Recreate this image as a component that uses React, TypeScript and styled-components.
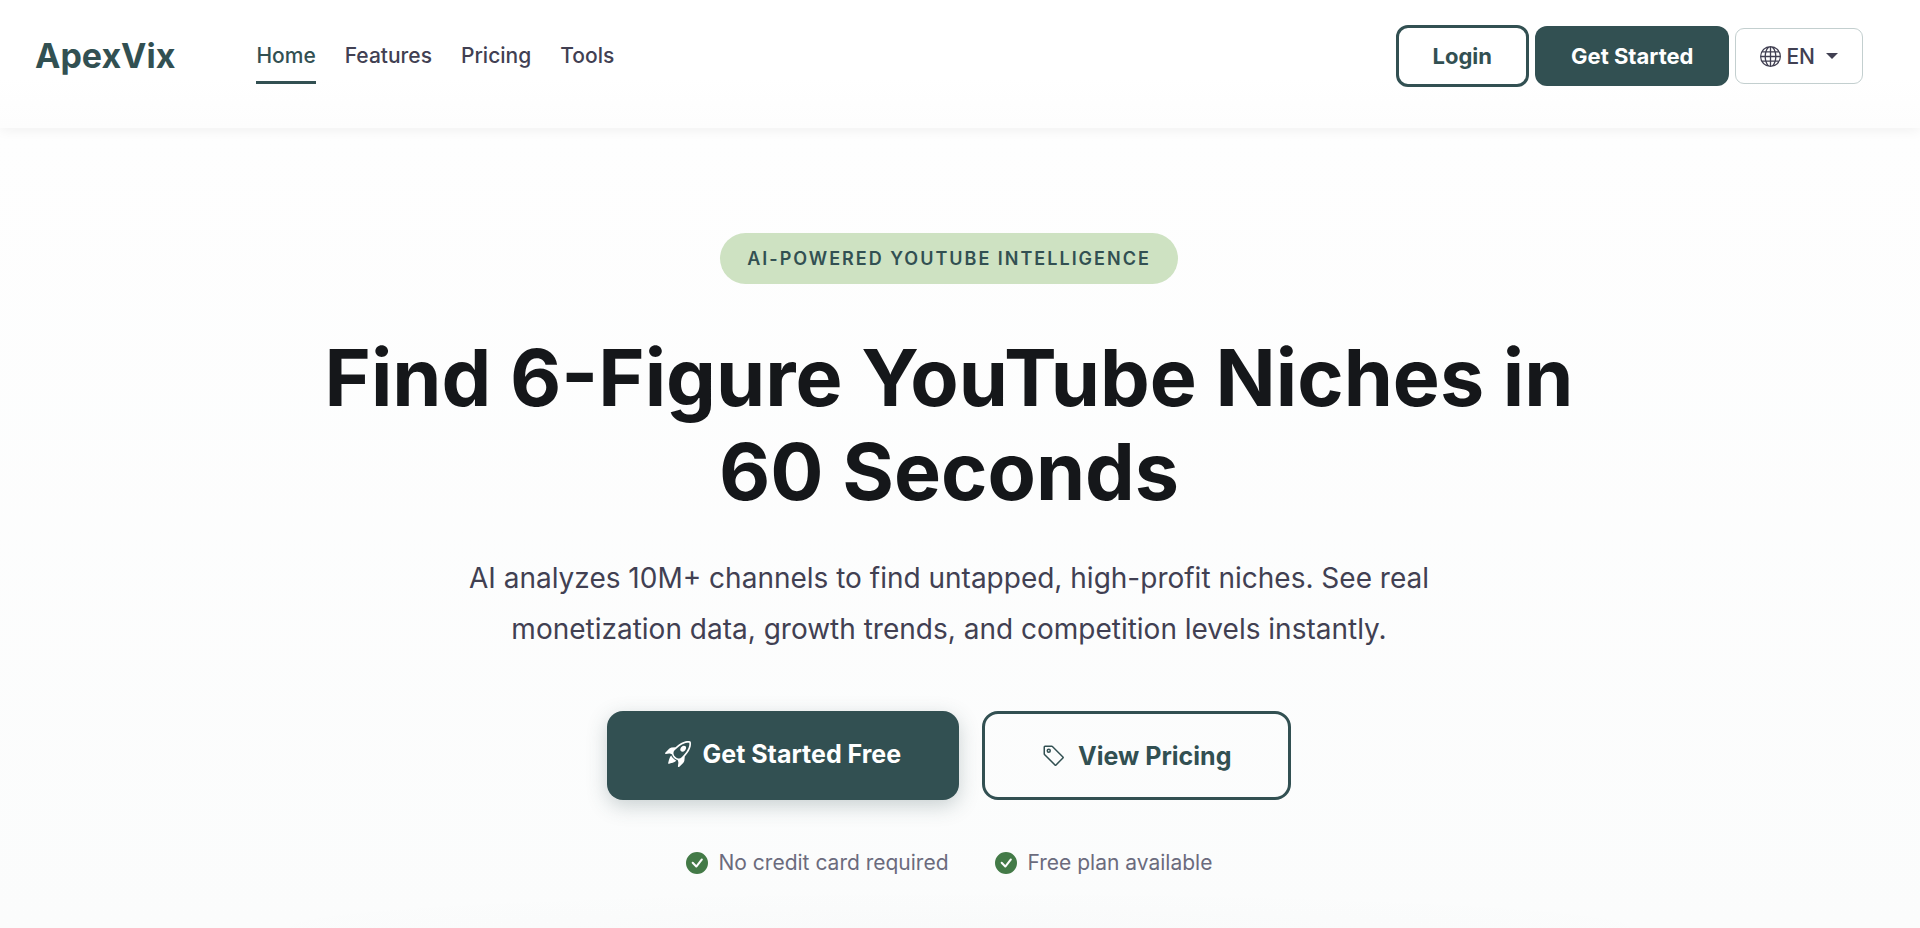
import React from "react";
import styled, { createGlobalStyle, css } from "styled-components";
import {
  BsCheckCircleFill,
  BsGlobe,
  BsRocketTakeoff,
  BsTag,
} from "react-icons/bs";

const GlobalStyle = createGlobalStyle`
  *, *::before, *::after { box-sizing: border-box; }
  body {
    margin: 0;
    background: #fdfdfd;
    font-family: Inter, "Liberation Sans", sans-serif;
    color: #414052;
    -webkit-font-smoothing: antialiased;
  }
`;

const Page = styled.div`
  display: flex;
  flex-direction: column;
  min-height: 100vh;
`;

const Header = styled.header`
  position: relative;
  display: flex;
  align-items: flex-start;
  min-height: 128px;
  padding: 25px 57px 0 35px;
  background: linear-gradient(180deg, #ffffff 60%, #fdfdfd 100%);
  box-shadow: 0 2px 12px rgba(0, 0, 0, 0.06);
`;

const Logo = styled.a`
  color: #325052;
  font-size: 34px;
  font-weight: 700;
  line-height: 62px;
  text-decoration: none;
`;

const Nav = styled.nav`
  display: flex;
  gap: 29px;
  margin-left: 81px;
`;

const NavLink = styled.a<{ $active?: boolean }>`
  height: 59px;
  border-bottom: 3px solid ${(p) => (p.$active ? "#325052" : "transparent")};
  color: ${(p) => (p.$active ? "#325052" : "#414052")};
  font-size: 21px;
  font-weight: 500;
  line-height: 62px;
  text-decoration: none;
`;

const Actions = styled.div`
  display: flex;
  align-items: center;
  gap: 6px;
  margin-left: auto;
`;

const outline = css`
  border: 3px solid #325052;
  background: transparent;
  color: #325052;
`;

const solid = css`
  border: 0;
  background: #325052;
  color: #ffffff;
`;

const Button = styled.button<{ $variant: "solid" | "outline" }>`
  ${(p) => (p.$variant === "solid" ? solid : outline)}
  height: ${(p) => (p.$variant === "solid" ? 60 : 62)}px;
  padding: 0 ${(p) => (p.$variant === "solid" ? 36 : 34)}px;
  border-radius: 12px;
  font-family: inherit;
  font-size: 22px;
  font-weight: 700;
  cursor: pointer;
`;

const LanguageButton = styled.button`
  display: flex;
  align-items: center;
  height: 56px;
  padding: 0 24px;
  border: 1px solid #c3cfcf;
  border-radius: 9px;
  background: transparent;
  color: #414052;
  font-family: inherit;
  font-size: 21px;
  font-weight: 500;
  cursor: pointer;

  svg {
    margin-right: 5px;
  }
`;

const Caret = styled.span`
  margin-left: 11px;
  border: 6px solid transparent;
  border-top-color: currentColor;
  border-bottom: 0;
`;

const Hero = styled.main`
  display: flex;
  flex: 1;
  flex-direction: column;
  align-items: center;
  padding: 105px 22px 48px 0;
  background:
    radial-gradient(ellipse 42% 40px at 50% 100%, rgba(50, 80, 82, 0.01), transparent),
    linear-gradient(180deg, #fefefe 0%, #fbfcfc 100%);
  text-align: center;
`;

const Badge = styled.p`
  margin: 0;
  padding: 0 27px;
  border-radius: 26px;
  background: #cee2c2;
  color: #325052;
  font-size: 18px;
  font-weight: 600;
  letter-spacing: 2px;
  line-height: 51px;
`;

const Title = styled.h1`
  max-width: 1300px;
  margin: 46px 0 0;
  color: #15171a;
  font-size: 79px;
  font-weight: 700;
  line-height: 94px;
`;

const Lead = styled.p`
  max-width: 1000px;
  margin: 35px 0 0;
  font-size: 28px;
  line-height: 51px;
`;

const CtaRow = styled.div`
  display: flex;
  gap: 23px;
  margin-top: 56px;
`;

const Cta = styled.button<{ $variant: "solid" | "outline" }>`
  ${(p) => (p.$variant === "solid" ? solid : outline)}
  display: flex;
  align-items: center;
  gap: 12px;
  height: 89px;
  padding: ${(p) => (p.$variant === "solid" ? "0 58px 3px" : "0 57px")};
  border-radius: 16px;
  box-shadow: ${(p) =>
    p.$variant === "solid" ? "0 6px 20px rgba(50, 80, 82, 0.25)" : "none"};
  font-family: inherit;
  font-size: 25px;
  font-weight: 700;
  cursor: pointer;
`;

const TrustList = styled.ul`
  display: flex;
  gap: 46px;
  margin: 46px 0 0;
  padding: 0;
  list-style: none;
`;

const TrustItem = styled.li`
  display: flex;
  align-items: center;
  gap: 11px;
  color: #6b6b7d;
  font-size: 21px;
  line-height: 34px;

  svg {
    color: #437a47;
  }
`;

const links = ["Home", "Features", "Pricing", "Tools"];
const promises = ["No credit card required", "Free plan available"];

export default function App() {
  return (
    <Page>
      <GlobalStyle />
      <Header>
        <Logo href="#">ApexVix</Logo>
        <Nav aria-label="Main">
          {links.map((label, i) => (
            <NavLink key={label} href={`#${label.toLowerCase()}`} $active={i === 0}>
              {label}
            </NavLink>
          ))}
        </Nav>
        <Actions>
          <Button $variant="outline">Login</Button>
          <Button $variant="solid">Get Started</Button>
          <LanguageButton aria-haspopup="menu">
            <BsGlobe size={21} />
            EN
            <Caret />
          </LanguageButton>
        </Actions>
      </Header>
      <Hero>
        <Badge>AI-POWERED YOUTUBE INTELLIGENCE</Badge>
        <Title>Find 6-Figure YouTube Niches in 60 Seconds</Title>
        <Lead>
          AI analyzes 10M+ channels to find untapped, high-profit niches. See real
          monetization data, growth trends, and competition levels instantly.
        </Lead>
        <CtaRow>
          <Cta $variant="solid">
            <BsRocketTakeoff size={26} />
            Get Started Free
          </Cta>
          <Cta $variant="outline">
            <BsTag size={24} />
            View Pricing
          </Cta>
        </CtaRow>
        <TrustList>
          {promises.map((text) => (
            <TrustItem key={text}>
              <BsCheckCircleFill size={22} />
              {text}
            </TrustItem>
          ))}
        </TrustList>
      </Hero>
    </Page>
  );
}
